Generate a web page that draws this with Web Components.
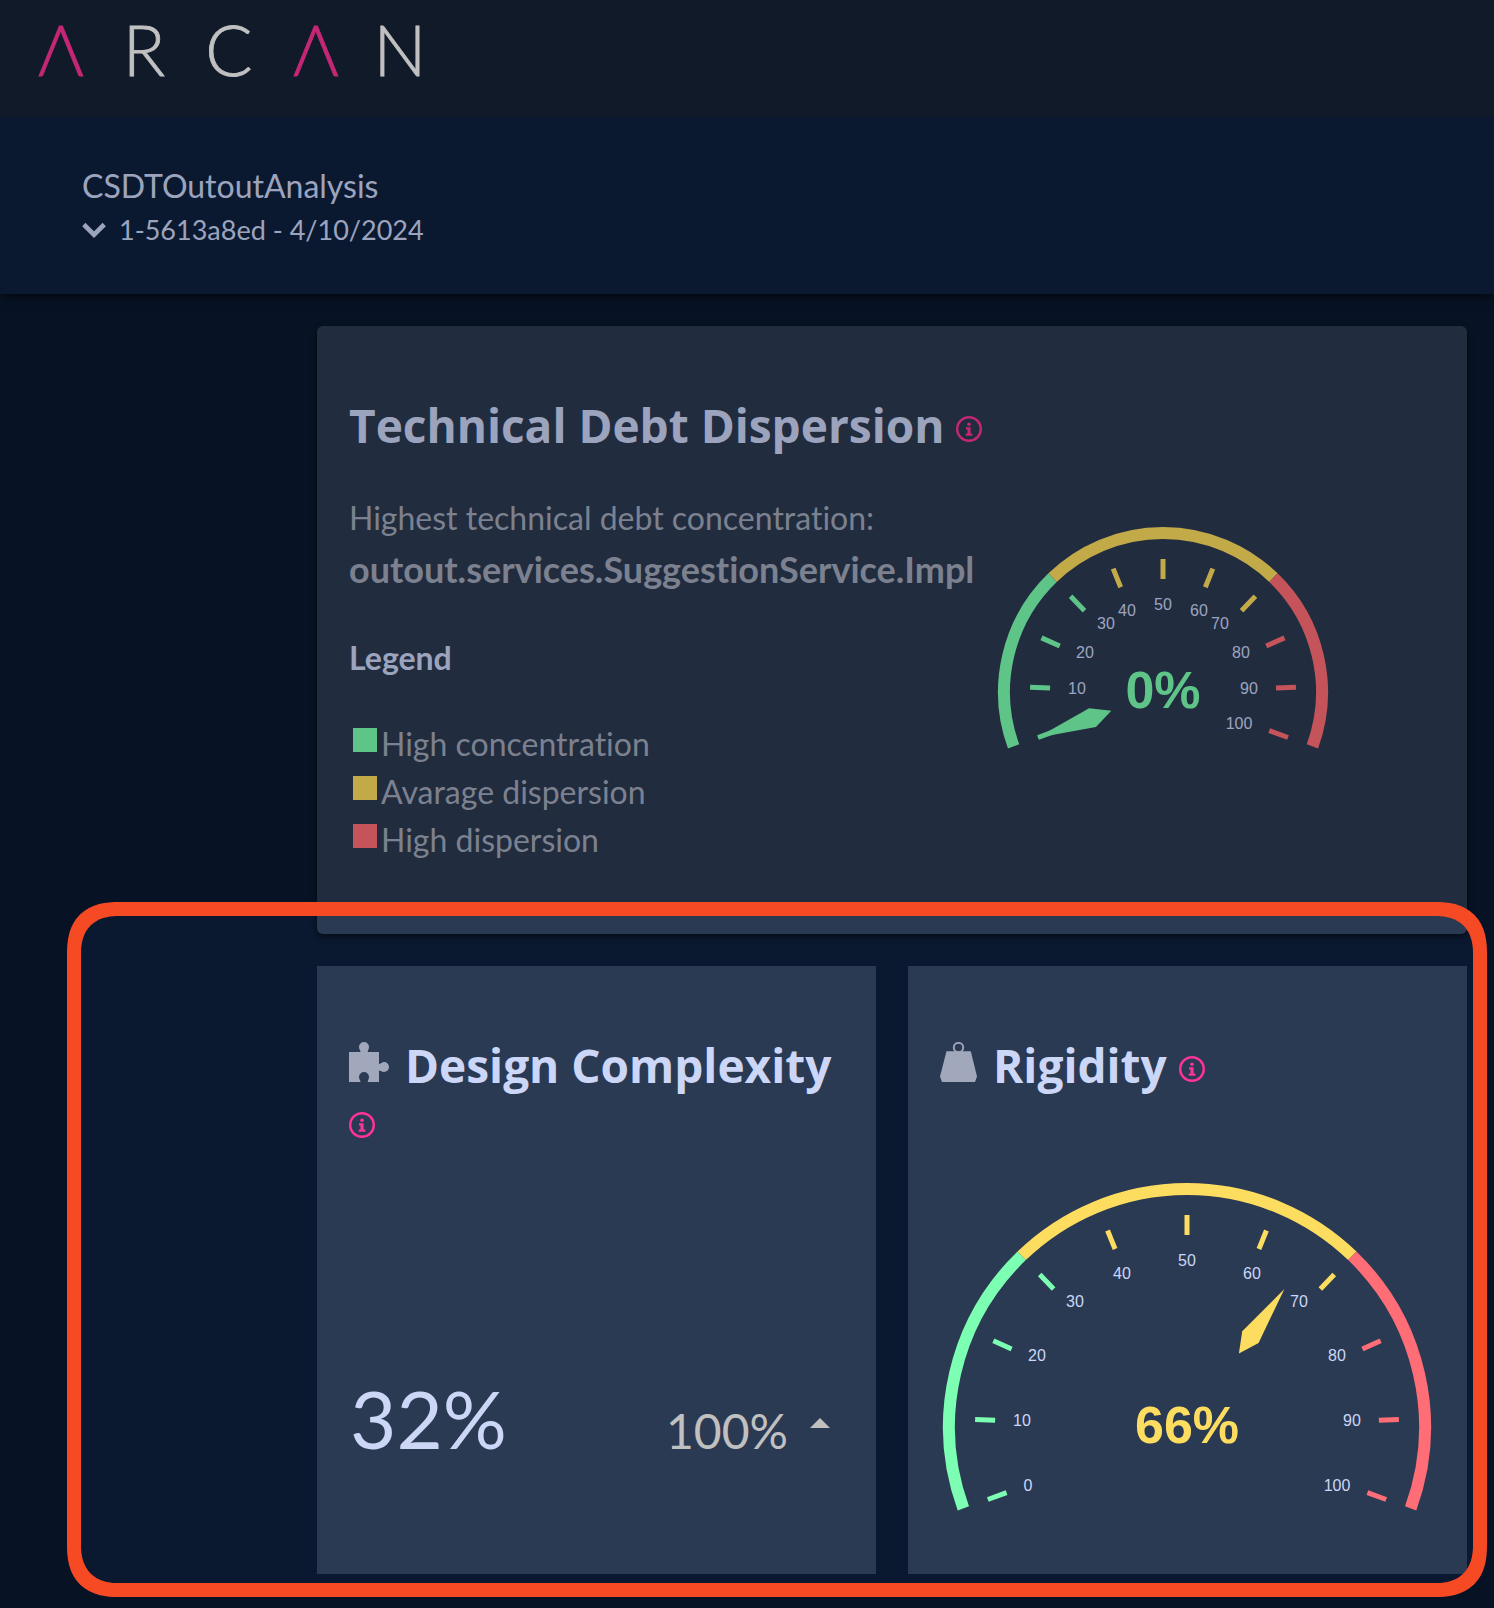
<!DOCTYPE html>
<html lang="en">
<head>
<meta charset="utf-8">
<meta name="viewport" content="width=device-width, initial-scale=1">
<title>Arcan dashboard</title>
<style>
  html { background: #0a192f; }
  body { margin: 0; font-family: Lato, "Liberation Sans", sans-serif; font-variant-ligatures: none; color: #ccd6f6; }
</style>
</head>
<body>
<arcan-app></arcan-app>
<script>
const define = (name, html, setup) => {
  const tpl = document.createElement('template');
  tpl.innerHTML = html;
  customElements.define(name, class extends HTMLElement {
    constructor() {
      super();
      this.attachShadow({ mode: 'open' }).appendChild(tpl.content.cloneNode(true));
    }
    connectedCallback() { if (setup) setup(this, this.shadowRoot); }
  });
};

define('arcan-logo', `
  <style>
    :host { display: block; }
    svg { display: block; }
    text { font: 300 70px Lato, sans-serif; fill: #fafafa; stroke: #fafafa; stroke-width: .8px; text-anchor: middle; }
    .accent { fill: #ff3399; stroke: #ff3399; }
  </style>
  <svg width="430" height="116" viewBox="0 0 430 116" role="img" aria-label="Arcan">
    <text class="accent" x="61" y="76">Λ</text>
    <text x="144" y="76">R</text>
    <text x="229" y="76">C</text>
    <text class="accent" x="316" y="76">Λ</text>
    <text x="400" y="76">N</text>
  </svg>`);

define('app-header', `
  <style>
    :host { display: flex; align-items: flex-start; box-sizing: border-box; height: 117px; background: #162236; }
    a { display: block; }
  </style>
  <a href="#" aria-label="Arcan home"><arcan-logo></arcan-logo></a>`);

define('project-bar', `
  <style>
    :host { display: block; position: relative; padding: 45px 82px 44px; background: #0e213e; box-shadow: 0 6px 8px -2px rgba(0,0,0,.5); }
    h1 { margin: 0; font-size: 32px; line-height: 48px; font-weight: 400; }
    label { display: flex; align-items: center; gap: 13px; height: 40px; }
    select { appearance: none; border: 0; padding: 0; margin: 0; background: transparent; color: inherit; font: 27px Lato, sans-serif; line-height: 40px; }
    svg { display: block; }
  </style>
  <h1><slot></slot></h1>
  <label>
    <svg width="24" height="16" viewBox="0 0 24 16" aria-hidden="true"><path d="M1.800 2.500L12 12.700L22.200 2.500" fill="none" stroke="#ccd6f6" stroke-width="4.600"/></svg>
    <select aria-label="Version"><option>1-5613a8ed - 4/10/2024</option></select>
  </label>`);

define('info-button', `
  <style>
    :host { display: inline-block; width: 26px; height: 26px; }
    button { display: block; width: 26px; height: 26px; padding: 0; border: 0; background: none; color: #ff3399; cursor: pointer; }
    svg { display: block; }
  </style>
  <button type="button" aria-label="More information">
    <svg width="26" height="26" viewBox="0 0 26 26" fill="currentColor">
      <circle cx="13" cy="13" r="11.800" fill="none" stroke="currentColor" stroke-width="2.400"/>
      <circle cx="13" cy="8.200" r="1.800"/>
      <path d="M10 11.200h4.600v6.300h1.700v2.200H9.700v-2.200h1.800v-4.100H10z"/>
    </svg>
  </button>`);

define('puzzle-icon', `
  <style>:host { display: inline-block; width: 40px; height: 40px; } svg { display: block; }</style>
  <svg width="40" height="40" viewBox="0 0 40 40" fill="#a2a8bb" aria-hidden="true">
    <path d="M0 10H11.500C11.500 8.500 10 7 10 5A5 5 0 0 1 20 5C20 7 18.700 8.500 18.700 10H30V22C31.500 22 33 20 35 20A5 5 0 0 1 35 30C33 30 31.500 28.600 30 28.600V40H18.700C18.700 38.500 20 37 20 35A5 5 0 0 0 10 35C10 37 11.500 38.500 11.500 40H0Z"/>
  </svg>`);

define('weight-icon', `
  <style>:host { display: inline-block; width: 37px; height: 40px; } svg { display: block; }</style>
  <svg width="37" height="40" viewBox="0 0 37 40" fill="#a2a8bb" aria-hidden="true">
    <circle cx="18.500" cy="5.600" r="4.700" fill="none" stroke="#a2a8bb" stroke-width="1.900"/>
    <path d="M6.500 9.300H30.800L37 34.500L35 40H2L0 34.500Z"/>
  </svg>`);

define('card-title', `
  <style>
    :host { display: block; }
    h2 { margin: 0; font: 700 46px/56px "Open Sans", sans-serif; }
    ::slotted([slot=icon]) { margin-right: 16px; vertical-align: 1px; }
    info-button { vertical-align: 1px; }
  </style>
  <h2><slot name="icon"></slot><slot></slot> <info-button></info-button></h2>`);

define('legend-item', `
  <style>
    :host { display: flex; align-items: flex-start; gap: 4px; padding-left: 4px; font-size: 32px; line-height: 48px; color: #a2a8bb; }
    i { width: 24px; height: 24px; margin-top: 8px; background: var(--swatch); }
  </style>
  <i></i><span><slot></slot></span>`);

define('gauge-chart', `
  <style>
    :host { display: block; }
    svg { display: block; max-width: 100%; }
    .label { font: 16px "Liberation Sans", Arial, sans-serif; fill: #ccd6f6; text-anchor: middle; }
    .value { font: bold 52px "Liberation Sans", Arial, sans-serif; text-anchor: middle; }
  </style>
  <svg role="img"></svg>`, (host, root) => {
  const R = +host.getAttribute('radius');
  const value = +host.getAttribute('value');
  const box = host.getAttribute('box').split(' ');
  const labels = host.getAttribute('labels').split(';').map(p => p.split(',').map(Number));
  const bands = [[0, 30, '#7cffb2'], [30, 70, '#fddd60'], [70, 100, '#ff6e76']];
  const colour = v => bands.find(b => v <= b[1])[2];
  const at = (v, r, side = 0) => {
    const a = (200 - v * 2.2) * Math.PI / 180;
    return (Math.cos(a) * r - Math.sin(a) * side).toFixed(2) + ' ' + (-Math.sin(a) * r - Math.cos(a) * side).toFixed(2);
  };
  let out = '';
  for (const [from, to, c] of bands)
    out += `<path d="M${at(from, R - 6)}A${R - 6} ${R - 6} 0 0 1 ${at(to, R - 6)}" fill="none" stroke="${c}" stroke-width="12"/>`;
  for (let v = 0; v <= 100; v += 10)
    out += `<path d="M${at(v, R - 32)}L${at(v, R - 52)}" stroke="${colour(v)}" stroke-width="5"/>`;
  // Label offsets are listed for 0..50; the right half mirrors the left.
  for (let i = 0; i <= 10; i++) {
    const p = labels[i <= 5 ? i : 10 - i];
    if (i === 0 && value === 0) continue;
    const x = i === 10 ? +host.getAttribute('last') : i <= 5 ? p[0] : -p[0];
    out += `<text class="label" x="${x}" y="${p[1] + 5}">${i * 10}</text>`;
  }
  const tail = +host.getAttribute('tail');
  out += `<path d="M${at(value, tail)}L${at(value, tail + 20, 10)}L${at(value, tail + 79)}L${at(value, tail + 20, -10)}Z" fill="${colour(value)}"/>`;
  out += `<text class="value" x="0" y="16" fill="${colour(value)}">${value}%</text>`;
  const svg = root.querySelector('svg');
  svg.setAttribute('viewBox', box.join(' '));
  svg.setAttribute('width', box[2]);
  svg.setAttribute('height', box[3]);
  svg.setAttribute('aria-label', value + '%');
  svg.innerHTML = out;
});

define('dispersion-card', `
  <style>
    :host { display: flex; align-items: center; gap: 15px; padding: 71px 32px 70px; background: #2b3a53; border-radius: 6px; box-shadow: 0 2px 6px rgba(0,0,0,.6); }
    .text { white-space: nowrap; }
    p { margin: 41px 0 0; font-size: 32px; line-height: 48px; color: #a2a8bb; }
    .name { display: block; font-size: 36px; line-height: 54px; font-weight: 700; color: #a2a8bb; }
    h3 { margin: 38px 0; font-size: 32px; line-height: 48px; font-weight: 700; }
  </style>
  <div class="text">
    <card-title>Technical Debt Dispersion</card-title>
    <p>Highest technical debt concentration:</p>
    <strong class="name">outout.services.SuggestionService.Impl</strong>
    <h3>Legend</h3>
    <legend-item style="--swatch:#7cffb2">High concentration</legend-item>
    <legend-item style="--swatch:#fddd60">Avarage dispersion</legend-item>
    <legend-item style="--swatch:#ff6e76">High dispersion</legend-item>
  </div>
  <gauge-chart value="0" radius="165" tail="55" box="-166 -181 332 240" last="76"
    labels="-76,32;-86,-3;-78,-39;-57,-68;-36,-81;0,-87"></gauge-chart>`);

define('metric-card', `
  <style>
    :host { display: flex; flex-direction: column; box-sizing: border-box; min-height: 608px; padding: 71px 32px 62px; background: #2b3a53; }
    .body { margin-top: auto; }
  </style>
  <slot name="title"></slot>
  <div class="body"><slot></slot></div>`);

define('metric-value', `
  <style>
    :host { display: flex; align-items: baseline; justify-content: space-between; padding: 0 14px 46px 1px; }
    .now { font-size: 80px; line-height: 96px; }
    .trend { display: flex; align-items: center; gap: 22px; font-size: 48px; line-height: 58px; color: #c0c0c0; }
    svg { display: block; margin-bottom: 16px; }
  </style>
  <span class="now"><slot></slot></span>
  <span class="trend"><slot name="trend"></slot>
    <svg width="20" height="10" viewBox="0 0 20 10" aria-hidden="true"><path d="M10 0L20 10H0Z" fill="#c0c0c0"/></svg>
  </span>`);

define('focus-ring', `
  <style>
    :host { display: block; position: absolute; z-index: 5; left: 67px; right: 7px; top: 608px; bottom: 11px; box-sizing: border-box;
      border: 14px solid #f64a25; border-radius: 42px; box-shadow: 0 0 0 2000px rgba(0,0,0,.23); pointer-events: none; }
    @supports (corner-shape: superellipse(1.3)) {
      :host { border-radius: 52px; corner-shape: superellipse(1.3); }
    }
  </style>`);

define('dashboard-grid', `
  <style>
    :host { display: grid; position: relative; grid-template-columns: 1fr 1fr; gap: 32px; padding: 32px 27px 34px 317px; }
    dispersion-card { grid-column: 1 / -1; }
  </style>
  <dispersion-card></dispersion-card>
  <metric-card>
    <card-title slot="title"><puzzle-icon slot="icon"></puzzle-icon>Design Complexity</card-title>
    <metric-value>32%<span slot="trend">100%</span></metric-value>
  </metric-card>
  <metric-card>
    <card-title slot="title"><weight-icon slot="icon"></weight-icon>Rigidity</card-title>
    <gauge-chart value="66" radius="244" tail="90" box="-247 -245 494 330" last="150"
      labels="-159,59;-165,-6;-150,-71;-112,-125;-65,-153;0,-166"></gauge-chart>
  </metric-card>
  <focus-ring></focus-ring>`);

define('arcan-app', `
  <style>
    :host { display: block; overflow: hidden; background: #0a192f; }
    project-bar { z-index: 1; }
    main { display: block; }
  </style>
  <header><app-header></app-header><project-bar>CSDTOutoutAnalysis</project-bar></header>
  <main><dashboard-grid></dashboard-grid></main>`);
</script>
</body>
</html>
